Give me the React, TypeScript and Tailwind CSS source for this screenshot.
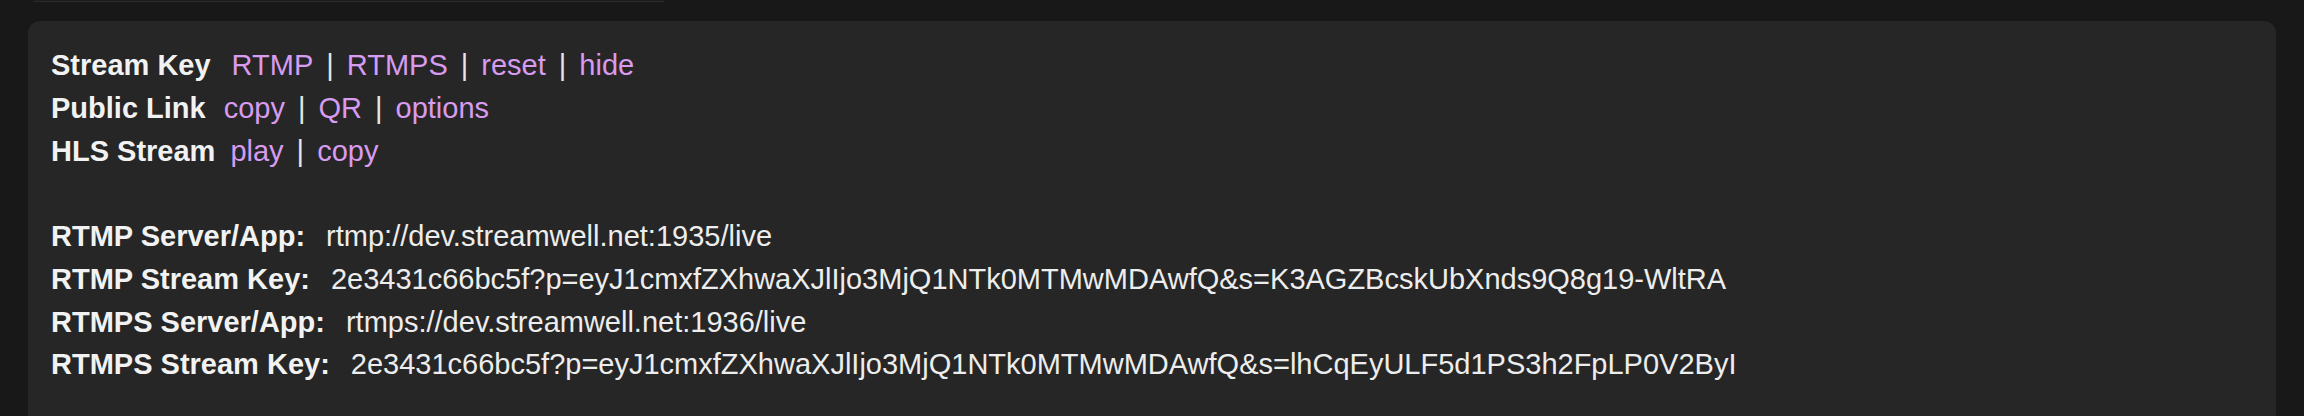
import React from "react";

const links = {
  stream: ["RTMP", "RTMPS", "reset", "hide"],
  public: ["copy", "QR", "options"],
  hls: ["play", "copy"],
};

const keyParams = [
  { label: "RTMP Server/App:", value: "rtmp://dev.streamwell.net:1935/live" },
  {
    label: "RTMP Stream Key:",
    value: "2e3431c66bc5f?p=eyJ1cmxfZXhwaXJlIjo3MjQ1NTk0MTMwMDAwfQ&s=K3AGZBcskUbXnds9Q8g19-WltRA",
  },
  { label: "RTMPS Server/App:", value: "rtmps://dev.streamwell.net:1936/live" },
  {
    label: "RTMPS Stream Key:",
    value: "2e3431c66bc5f?p=eyJ1cmxfZXhwaXJlIjo3MjQ1NTk0MTMwMDAwfQ&s=lhCqEyULF5d1PS3h2FpLP0V2ByI",
  },
];

function LinkRow({ label, items, gap }: { label: string; items: string[]; gap: string }) {
  return (
    <div className="whitespace-nowrap">
      <span className="font-bold text-[#f2f2f2]">{label}</span>
      <span className={gap}>
        {items.map((item, i) => (
          <React.Fragment key={item + i}>
            {i > 0 && <span className="mx-[13px] text-[#e6e6e6]">|</span>}
            <a href="#" className="text-[#d79bef] hover:underline">
              {item}
            </a>
          </React.Fragment>
        ))}
      </span>
    </div>
  );
}

export default function App() {
  return (
    <div className="min-h-screen bg-[#181818] font-['Liberation_Sans',Arial,sans-serif] text-[29px] leading-[42.75px]">
      <div className="ml-[33px] h-[2px] w-[632px] rounded-b-md border-b border-[#2b2b2b] bg-[#1d1d1d]" />
      <div className="mx-[28px] mt-[19px] rounded-[12px] bg-[#262626] px-[23px] pb-[48px] pt-[23px] text-[#ededed]">
        <LinkRow label="Stream Key" items={links.stream} gap="ml-[21px]" />
        <LinkRow label="Public Link" items={links.public} gap="ml-[18px]" />
        <LinkRow label="HLS Stream" items={links.hls} gap="ml-[15px]" />
        <div className="h-[42.75px]" />
        {keyParams.map((p) => (
          <div key={p.label} className="whitespace-nowrap">
            <span className="font-bold text-[#f2f2f2]">{p.label}</span>
            <span className="ml-[21px]">{p.value}</span>
          </div>
        ))}
      </div>
    </div>
  );
}
